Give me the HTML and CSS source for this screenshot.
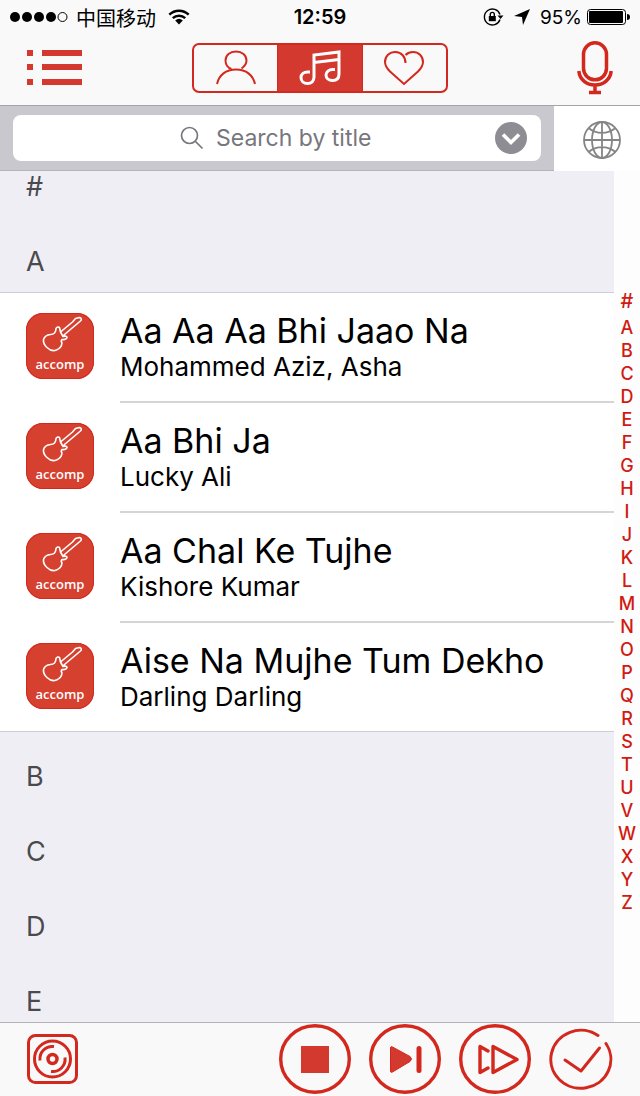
FILE: index.html
```html
<!DOCTYPE html>
<html lang="en">
<head>
  <meta charset="UTF-8">
  <meta name="viewport" content="width=device-width, initial-scale=1.0">
  <title>Songs</title>
  <link rel="stylesheet" href="styles.css">
</head>
<body>
  <svg class="sprite" aria-hidden="true">
    <symbol id="guitar" viewBox="0 0 68 42">
      <path d="M28.500 20Q30 18 30 15.500 31.500 13 33.500 14.500L34.500 19 46.500 9 49.500 5.500 53.500 4.500Q56 5 55 7.500L51.500 10.500 38.500 21.500 37 23.500Q41 22.500 41 24.500 40 27 36 26.500 34.500 28 36 30 35.500 35 30.500 37 25.500 39 21 34.500 17 31 17.500 26.500 19 22 24.500 21.500 27 21.500 28.500 20Z"/>
      <path d="M34.500 19L37 23.500"/>
    </symbol>
  </svg>

  <div class="status-bar">
    <div class="carrier">
      <svg width="58" height="12" viewBox="0 0 58 12">
        <circle cx="5" cy="6" r="5"/>
        <circle cx="17" cy="6" r="5"/>
        <circle cx="29" cy="6" r="5"/>
        <circle cx="41" cy="6" r="5"/>
        <circle cx="52.5" cy="6" r="4.5" fill="none" stroke="#000"/>
      </svg>
      <span lang="zh">中国移动</span>
      <svg width="22" height="16" viewBox="0 0 22 16" fill="none" stroke="#000" stroke-width="2.4">
        <path d="M1.3 5.6a14 14 0 0 1 19.4 0M4.8 9.2a9 9 0 0 1 12.4 0"/>
        <path d="M7.2 11.4a6 6 0 0 1 7.6 0L11 15.4z" fill="#000" stroke="none"/>
      </svg>
    </div>
    <div class="clock">12:59</div>
    <div class="battery">
      <svg width="21" height="18" viewBox="0 0 21 18" fill="none" stroke="#000" stroke-width="1.4">
        <path d="M17 6.5a8 8 0 1 0 0 5"/>
        <path d="M14.5 7.5h6l-3 3.6z" fill="#000" stroke="none"/>
        <path d="M5.8 8h7v5.2h-7z" fill="#000" stroke="none"/>
        <path d="M7.3 8V6.4a2 2 0 0 1 4 0V8"/>
      </svg>
      <svg width="16" height="16" viewBox="0 0 16 16"><path d="M16 0L9 16 8 8 0 7z"/></svg>
      <span>95%</span>
      <svg class="cell" width="43" height="16" viewBox="0 0 43 16">
        <rect x=".5" y=".5" width="38" height="15" rx="3" fill="none" stroke="#000"/>
        <rect x="2" y="2" width="34" height="12" rx="1"/>
        <path d="M40 5q3 0 3 3t-3 3z"/>
      </svg>
    </div>
  </div>

  <header class="toolbar">
    <button class="icon-button" aria-label="Menu">
      <svg width="55" height="36" viewBox="0 0 55 36" fill="#d3392f">
        <path d="M0 0h6v6H0zM15 0h40v6H15zM0 14h6v6H0zM15 14h40v6H15zM0 29h6v6H0zM15 29h40v6H15z"/>
      </svg>
    </button>
    <nav class="tabs">
      <button aria-label="Singers">
        <svg width="42" height="36" viewBox="0 0 42 36">
          <path d="M26.500 18.500c3-2 5-5 5-8C31.500 5 27 1.500 21 1.500S10.500 5 10.500 10.500c0 4 2.500 7.500 6 8.500"/>
          <path d="M2 34C4 25 11 19.500 21 19.500S38 25 40 34"/>
        </svg>
      </button>
      <button class="active" aria-label="Songs">
        <svg width="42" height="36" viewBox="0 0 42 36">
          <path d="M15 27V5l25-3V24M15 12.500l25-3"/>
          <path d="M15 27c0 4.200-2.700 6.500-6.500 6.500S2 31 2 27.500 5 22 8.500 22H11"/>
          <path d="M40 24c0 4.500-2.700 6.500-6.500 6.500S27 28 27 25s3-5.500 6.500-5.500H36"/>
        </svg>
      </button>
      <button aria-label="Favourites">
        <svg width="42" height="36" viewBox="0 0 42 36">
          <path d="M22.500 13c0-6-4-11-10-11S2 6 2 12c0 4 2 6.500 5 9.500L21 34l14-12.500c3-3 5-5.500 5-9.500 0-6-4.500-10-10-10-3 0-5.500 1-7.500 3"/>
        </svg>
      </button>
    </nav>
    <button class="icon-button" aria-label="Record">
      <svg width="36" height="54" viewBox="0 0 36 54" fill="none" stroke="#d3281e" stroke-width="3.500">
        <rect x="6.500" y="1.800" width="23" height="37" rx="11.500"/>
        <path d="M1.800 30c1 9 8 14 16.200 14s15.200-5 16.200-14M18 44v7M12 51.500h12"/>
      </svg>
    </button>
  </header>

  <div class="search-row">
    <form class="search-bar">
      <div class="search-field">
        <svg width="24" height="24" viewBox="0 0 24 24" fill="none" stroke="#77767c" stroke-width="1.700">
          <circle cx="9.500" cy="9.500" r="8"/>
          <path d="M15.500 15.500l7 7"/>
        </svg>
        <input type="text" placeholder="Search by title" aria-label="Search by title">
        <button type="button" class="more" aria-label="Search options">
          <svg width="32" height="32" viewBox="0 0 32 32">
            <circle cx="16" cy="16" r="16" fill="#8e8d93"/>
            <path d="M8 12.500l8 8 8-8" fill="none" stroke="#fff" stroke-width="3.600"/>
          </svg>
        </button>
      </div>
    </form>
    <button class="icon-button globe" aria-label="Language">
      <svg width="38" height="38" viewBox="0 0 38 38" fill="none" stroke="#858585" stroke-width="1.800">
        <circle cx="19" cy="19" r="18"/>
        <ellipse cx="19" cy="19" rx="10" ry="18"/>
        <path d="M19 1v36M1 19h36M5.500 7c8 6.500 19 6.500 27 0M5.500 31c8-6.500 19-6.500 27 0"/>
      </svg>
    </button>
  </div>

  <main class="content">
    <div class="list">
      <h2>#</h2>
      <h2>A</h2>
      <ul class="songs">
        <li>
          <div class="badge"><svg><use href="#guitar"/></svg>accomp</div>
          <div class="song">
            <h3>Aa Aa Aa Bhi Jaao Na</h3>
            <p>Mohammed Aziz, Asha</p>
          </div>
        </li>
        <li>
          <div class="badge"><svg><use href="#guitar"/></svg>accomp</div>
          <div class="song">
            <h3>Aa Bhi Ja</h3>
            <p>Lucky Ali</p>
          </div>
        </li>
        <li>
          <div class="badge"><svg><use href="#guitar"/></svg>accomp</div>
          <div class="song">
            <h3>Aa Chal Ke Tujhe</h3>
            <p>Kishore Kumar</p>
          </div>
        </li>
        <li>
          <div class="badge"><svg><use href="#guitar"/></svg>accomp</div>
          <div class="song">
            <h3>Aise Na Mujhe Tum Dekho</h3>
            <p>Darling Darling</p>
          </div>
        </li>
      </ul>
      <h2>B</h2>
      <h2>C</h2>
      <h2>D</h2>
      <h2>E</h2>
    </div>
    <nav class="index">
      <a href="#">#</a>
      <a href="#">A</a>
      <a href="#">B</a>
      <a href="#">C</a>
      <a href="#">D</a>
      <a href="#">E</a>
      <a href="#">F</a>
      <a href="#">G</a>
      <a href="#">H</a>
      <a href="#">I</a>
      <a href="#">J</a>
      <a href="#">K</a>
      <a href="#">L</a>
      <a href="#">M</a>
      <a href="#">N</a>
      <a href="#">O</a>
      <a href="#">P</a>
      <a href="#">Q</a>
      <a href="#">R</a>
      <a href="#">S</a>
      <a href="#">T</a>
      <a href="#">U</a>
      <a href="#">V</a>
      <a href="#">W</a>
      <a href="#">X</a>
      <a href="#">Y</a>
      <a href="#">Z</a>
    </nav>
  </main>

  <footer class="player">
    <button class="icon-button disc" aria-label="Playlist">
      <svg width="51" height="50" viewBox="0 0 51 50" fill="none" stroke="#d3281e" stroke-width="3">
        <rect x="1.500" y="1.500" width="48" height="47" rx="7"/>
        <circle cx="25.500" cy="25" r="18"/>
        <circle cx="25.500" cy="25" r="4.500" stroke-width="3.500"/>
        <path d="M13 26.500a12.500 12.500 0 0 1 14-14M38 23.500a12.500 12.500 0 0 1-14 14"/>
      </svg>
    </button>
    <button class="icon-button" aria-label="Stop">
      <svg width="72" height="70" viewBox="0 0 72 70">
        <ellipse cx="36" cy="35" rx="34.300" ry="33.300" fill="none" stroke="#d3281e" stroke-width="3.400"/>
        <path d="M22 22h28v27H22z" fill="#d3392f"/>
      </svg>
    </button>
    <button class="icon-button" aria-label="Next">
      <svg width="72" height="70" viewBox="0 0 72 70" stroke="#d3281e">
        <ellipse cx="36" cy="35" rx="34.300" ry="33.300" fill="none" stroke-width="3.400"/>
        <path d="M21.500 24v23q0 2 2 1l17.500-10.500q3-2.500 0-5L23.500 23q-2-1-2 1z" fill="#d3392f"/>
        <path d="M50 24.500v22" stroke-width="5" stroke-linecap="round"/>
      </svg>
    </button>
    <button class="icon-button" aria-label="Fast forward">
      <svg width="72" height="70" viewBox="0 0 72 70" fill="none" stroke="#d3281e" stroke-width="3.400" stroke-linejoin="round" stroke-linecap="round">
        <ellipse cx="36" cy="35" rx="34.300" ry="33.300"/>
        <path d="M34 22.500v26L58 35.500zM29 27l-8-4.500v26l8-4.500"/>
      </svg>
    </button>
    <button class="icon-button" aria-label="Done">
      <svg width="64" height="62" viewBox="0 0 64 62" fill="none" stroke="#d3281e" stroke-width="3" stroke-linecap="round">
        <path d="M49 7.500A30 29 0 1 0 57 15.500"/>
        <path d="M16 32l16 11L50.500 20" stroke-linejoin="round"/>
      </svg>
    </button>
  </footer>
</body>
</html>
```
FILE: styles.css
```css
* {
  box-sizing: border-box;
}
body {
  margin: 0;
  height: 100vh;
  display: flex;
  flex-direction: column;
  font-family: Inter, "Noto Sans CJK SC", sans-serif;
  color: #000;
  background: #f9f9f9;
}
svg {
  display: block;
}
button {
  padding: 0;
  border: none;
  background: none;
  cursor: pointer;
}
.sprite {
  display: none;
}
.status-bar {
  height: 34px;
  padding: 0 10px;
  display: grid;
  grid-template-columns: 1fr auto 1fr;
  align-items: center;
  font-size: 20px;
}
.carrier, .battery {
  display: flex;
  align-items: center;
  gap: 8px;
}
.carrier svg:last-child {
  margin-left: 4px;
}
.battery {
  justify-content: flex-end;
  gap: 10px;
  font-size: 19px;
}
.battery .cell {
  margin-left: -5px;
}
.clock {
  font-weight: 600;
}
.toolbar {
  height: 71px;
  padding: 0 27px 4px;
  display: grid;
  grid-template-columns: 1fr auto 1fr;
  justify-items: start;
  align-items: center;
}
.toolbar .icon-button:last-child {
  justify-self: end;
}
.tabs {
  width: 256px;
  height: 50px;
  display: flex;
  border: 2px solid #d3281e;
  border-radius: 7px;
  overflow: hidden;
}
.tabs button {
  flex: 1;
  display: flex;
  justify-content: center;
  align-items: center;
}
.tabs svg {
  fill: none;
  stroke: #d3281e;
  stroke-width: 2;
}
.tabs .active {
  background: #d3392f;
  border-left: 1px solid #d3281e;
  border-right: 1px solid #d3281e;
}
.tabs .active svg {
  stroke: #fff;
  stroke-width: 3;
}
.search-row {
  height: 66px;
  display: flex;
  border-top: 1px solid #a5a5a9;
  background: #fff;
}
.search-bar {
  flex: 1;
  padding: 9px 13px;
  background: #c9c8ce;
  border-bottom: 1px solid #b4b3b8;
}
.search-field {
  position: relative;
  height: 46px;
  display: flex;
  justify-content: center;
  align-items: center;
  gap: 12px;
  border-radius: 8px;
  background: #fff;
}
.search-field input {
  width: 158px;
  padding: 0;
  border: none;
  outline: none;
  font-family: inherit;
  font-size: 23px;
  background: none;
}
.search-field input::placeholder {
  color: #77767c;
}
.more {
  position: absolute;
  right: 14px;
}
.globe {
  width: 86px;
  padding: 2px 0 0 29px;
}
.content {
  flex: 1;
  min-height: 0;
  display: flex;
  overflow: hidden;
  background: #fdfdfd;
}
.list {
  flex: 1;
  background: #efeef4;
}
.list h2 {
  height: 75px;
  margin: 0;
  padding: 29px 0 0 26px;
  font-size: 27px;
  line-height: 32px;
  font-weight: 400;
  color: #4a4a4e;
}
/* first heading is partly scrolled under the search bar */
.list h2:first-child {
  height: 46px;
  padding-top: 0;
}
.songs {
  margin: 0;
  padding: 0;
  list-style: none;
  background: #fff;
  border-top: 1px solid #cfced3;
  border-bottom: 1px solid #cfced3;
}
.songs li {
  height: 110px;
  padding-left: 26px;
  display: flex;
  gap: 26px;
}
.songs li:last-child {
  height: 108px;
}
.badge {
  width: 68px;
  height: 66px;
  margin-top: 20px;
  border-radius: 17px;
  background: #d5402f;
  box-shadow: inset 0 0 0 1px #d3281e;
  color: #fff;
  font: 600 13px/18px "Open Sans", sans-serif;
  text-align: center;
}
.badge svg {
  width: 68px;
  height: 42px;
  fill: none;
  stroke: #fff;
  stroke-width: 1.6;
  stroke-linejoin: round;
}
.song {
  flex: 1;
  padding-top: 18px;
  border-bottom: 2px solid #d5d5d7;
}
.songs li:last-child .song {
  border-bottom: none;
}
.song h3 {
  margin: 0;
  font-size: 34px;
  line-height: 40px;
  font-weight: 400;
}
.song p {
  margin: 0;
  font-size: 26px;
  line-height: 32px;
}
.index {
  width: 26px;
  padding-top: 119px;
  display: flex;
  flex-direction: column;
}
.index a {
  font-size: 18px;
  line-height: 23px;
  font-weight: 500;
  text-align: center;
  text-decoration: none;
  color: #d01a12;
}
.index a:first-child {
  margin-bottom: 3px;
  font-size: 20px;
}
.player {
  height: 74px;
  padding: 0 27px 2px;
  display: flex;
  align-items: center;
  gap: 18px;
  border-top: 1px solid #b4b3b8;
}
.disc {
  margin-right: auto;
}
```
